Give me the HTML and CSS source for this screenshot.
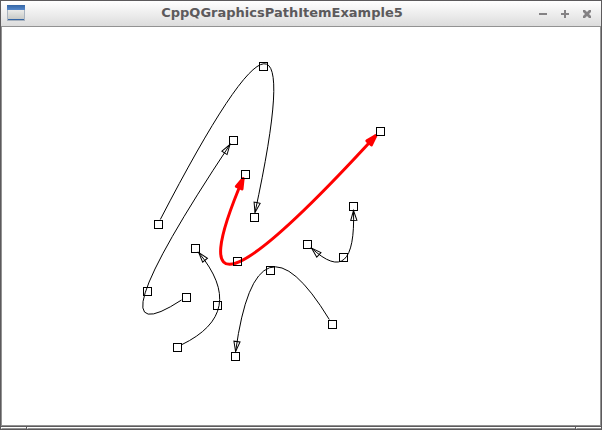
FILE: index.html
```html
<!DOCTYPE html>
<html lang="en">
<head>
<meta charset="utf-8">
<title>CppQGraphicsPathItemExample5</title>
<link rel="stylesheet" href="styles.css">
</head>
<body>
<div class="window">
  <header class="titlebar">
    <svg class="app-icon" width="18" height="17" viewBox="0 0 18 17" aria-hidden="true">
      <defs>
        <linearGradient id="pane" x1="0" y1="0" x2="0" y2="1"><stop offset="0" stop-color="#eeeeec"/><stop offset="1" stop-color="#c8cac7"/></linearGradient>
        <linearGradient id="bar" x1="0" y1="0" x2="0" y2="1"><stop offset="0" stop-color="#3465a4"/><stop offset="1" stop-color="#5588cc"/></linearGradient>
      </defs>
      <rect x="0" y="0" width="18" height="16" fill="#a9b3bf"/>
      <rect x="1" y="4" width="16" height="10" fill="url(#pane)"/>
      <rect x="0" y="0" width="18" height="5" fill="url(#bar)"/>
      <rect x="1" y="14" width="16" height="1" fill="#3465a4"/>
    </svg>
    <h1 class="title">CppQGraphicsPathItemExample5</h1>
    <div class="controls">
      <button class="control" aria-label="Minimize"><svg width="8" height="8" viewBox="0 0 8 8"><path d="M0 3h8v2H0z"/></svg></button>
      <button class="control" aria-label="Maximize"><svg width="8" height="8" viewBox="0 0 8 8"><path d="M3 0h2v3h3v2H5v3H3V5H0V3h3z"/></svg></button>
      <button class="control" aria-label="Close"><svg width="8" height="8" viewBox="0 0 8 8"><path d="M0 0h2l2 2 2-2h2v2L6 4l2 2v2H6L4 6 2 8H0V6l2-2-2-2z"/></svg></button>
    </div>
  </header>
  <main class="view">
    <svg class="scene" width="598" height="398" viewBox="2 27 598 398" role="img" aria-label="Curved arrows with draggable handles">
      <defs>
        <marker id="arrow" markerUnits="userSpaceOnUse" markerWidth="30" markerHeight="20" viewBox="-15 -10 30 20" orient="auto-start-reverse">
          <path class="head" d="M0 0L-10-3.1V3.1z"/>
        </marker>
        <marker id="arrow-selected" markerUnits="userSpaceOnUse" markerWidth="30" markerHeight="20" viewBox="-15 -10 30 20" orient="auto-start-reverse">
          <path class="head selected" d="M0 0L-10-3.1V3.1z"/>
        </marker>
        <rect id="handle" class="handle" x="-4" y="-4" width="8" height="8"/>
      </defs>
      <g>
        <path class="curve" marker-end="url(#arrow)" d="M160.3 219.5Q320-88.5 255 212.5"/>
        <path class="curve" marker-end="url(#arrow)" d="M181.5 300Q84.5 363.5 230 144.5"/>
        <path class="curve" marker-end="url(#arrow)" d="M181.5 344.8Q248 312.5 198.7 252.5"/>
        <path class="curve" marker-end="url(#arrow)" d="M329.3 319.5Q256.5 200 235.6 351.5"/>
        <path class="curve" marker-start="url(#arrow)" marker-end="url(#arrow)" d="M311.5 248.1Q356 289 353.5 210.5"/>
        <path class="curve selected" marker-start="url(#arrow-selected)" marker-end="url(#arrow-selected)" d="M243.1 178.5Q161.5 369.5 375.9 135.5"/>
      </g>
      <g transform="translate(.5 .5)">
        <use href="#handle" x="158" y="224"/><use href="#handle" x="263" y="66"/><use href="#handle" x="254" y="217"/>
        <use href="#handle" x="186" y="297"/><use href="#handle" x="147" y="291"/><use href="#handle" x="233" y="140"/>
        <use href="#handle" x="177" y="347"/><use href="#handle" x="217" y="305"/><use href="#handle" x="195" y="248"/>
        <use href="#handle" x="332" y="324"/><use href="#handle" x="270" y="270"/><use href="#handle" x="235" y="356"/>
        <use href="#handle" x="307" y="244"/><use href="#handle" x="343" y="257"/><use href="#handle" x="353" y="206"/>
        <use href="#handle" x="245" y="174"/><use href="#handle" x="237" y="261"/><use href="#handle" x="380" y="131"/>
      </g>
    </svg>
  </main>
  <footer class="grips"><span class="grip corner"></span><span class="grip edge"></span><span class="grip corner"></span></footer>
</div>
</body>
</html>
```

FILE: styles.css
```css
* {
  box-sizing: border-box;
}

body {
  margin: 0;
  background: #fff;
}

.window {
  display: flex;
  flex-direction: column;
  min-height: 100vh;
  overflow: hidden;
  border: 1px solid #5c5a5c;
}

.titlebar {
  display: grid;
  grid-template-columns: auto 1fr auto;
  align-items: center;
  height: 26px;
  padding: 0 10px 0 6px;
  border-bottom: 1px solid #929292;
  background: linear-gradient(#fff, #dcdcdc);
}

.title {
  margin: 0;
  padding-bottom: 2px;
  color: #5c5a5c;
  font: bold 13px/18px "DejaVu Sans", sans-serif;
  text-align: center;
  white-space: nowrap;
}

.controls {
  display: flex;
  gap: 14px;
}

.control {
  display: flex;
  padding: 0;
  border: 0;
  background: none;
  fill: #848284;
}

.view {
  flex: 1;
  overflow: hidden;
  border: 1px solid #929292;
  border-top: 0;
  background: #fff;
}

.scene {
  display: block;
}

.curve {
  fill: none;
  stroke: #000;
  stroke-width: 1px;
}

.curve.selected {
  stroke: #f00;
  stroke-width: 3px;
}

.head {
  fill: none;
  stroke: #000;
  stroke-width: 1px;
}

.head.selected {
  fill: #f00;
  stroke: #f00;
  stroke-width: 3px;
  stroke-linejoin: round;
}

.handle {
  fill: none;
  stroke: #000;
  stroke-width: 1px;
}

.grips {
  display: flex;
  gap: 1px;
  height: 3px;
  padding-top: 1px;
  background: #5c5a5c;
}

.grip {
  border-bottom: 1px solid #929292;
  border-left: 1px solid #fff;
  background: #fff;
}

.corner {
  width: 25px;
}

.edge {
  flex: 1;
}
```
